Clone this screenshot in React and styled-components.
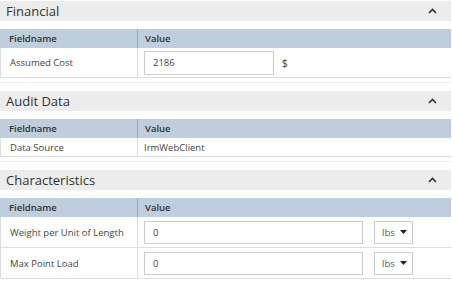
import React from "react";
import styled, { createGlobalStyle } from "styled-components";

const Global = createGlobalStyle`
  body {
    margin: 0;
    background: #ffffff;
    font-family: "Open Sans", "Liberation Sans", sans-serif;
    color: #333333;
  }
`;

const Page = styled.div`
  width: 451px;
  padding: 1px 0 0 0;
`;

const Section = styled.section`
  border-bottom: 1px solid #efefef;
  padding-bottom: 4px;
  margin-bottom: 8px;
`;

const Header = styled.div`
  height: 20px;
  background: #ececec;
  display: flex;
  align-items: center;
  justify-content: space-between;
  padding: 0 14px 0 6px;
  font-size: 13px;
  color: #333333;
`;

const Chevron = styled.svg`
  width: 9px;
  height: 6px;
`;

const Table = styled.div`
  margin-top: 8px;
  display: grid;
  grid-template-columns: 137px 1fr;
  font-size: 9.5px;
`;

const HeadCell = styled.div`
  background: #bfcedc;
  height: 19px;
  display: flex;
  align-items: center;
  padding-left: ${(p) => (p.$first ? "9px" : "7px")};
  font-weight: 600;
  color: #333333;
  border-left: ${(p) => (p.$first ? "none" : "1px solid #95a9bb")};
`;

const Cell = styled.div`
  min-height: ${(p) => p.$h}px;
  display: flex;
  align-items: center;
  padding-left: ${(p) => (p.$first ? "9px" : "6px")};
  border-bottom: 1px solid #dddddd;
  border-left: 1px solid #dddddd;
  box-sizing: border-box;
  gap: 8px;
  color: #444444;
`;

const Input = styled.div`
  box-sizing: border-box;
  width: ${(p) => p.$w}px;
  height: ${(p) => p.$ih}px;
  border: 1px solid #cccccc;
  display: flex;
  align-items: center;
  padding-left: 8px;
  color: #444444;
`;

const Unit = styled.span`
  color: #333333;
  font-size: 10px;
`;

const Select = styled.div`
  box-sizing: border-box;
  width: 39px;
  height: 23px;
  border: 1px solid #cccccc;
  margin-left: 3px;
  display: flex;
  align-items: center;
  padding-left: 7px;
  gap: 5px;
  color: #555555;
`;

const Caret = styled.svg`
  width: 7px;
  height: 4px;
`;

const Up = () => (
  <Chevron viewBox="0 0 9 6">
    <path d="M1 5 L4.5 1.5 L8 5" fill="none" stroke="#333" strokeWidth="1.6" />
  </Chevron>
);

const Down = () => (
  <Caret viewBox="0 0 7 4">
    <path d="M0 0 H7 L3.5 4 Z" fill="#222" />
  </Caret>
);

const Panel = ({ title, children }) => (
  <Section>
    <Header>
      <span>{title}</span>
      <Up />
    </Header>
    <Table>
      <HeadCell $first>Fieldname</HeadCell>
      <HeadCell>Value</HeadCell>
      {children}
    </Table>
  </Section>
);

const App = () => (
  <Page>
    <Global />
    <Panel title="Financial">
      <Cell $first $h={30}>Assumed Cost</Cell>
      <Cell $h={30}>
        <Input $w={130} $ih={24}>2186</Input>
        <Unit>$</Unit>
      </Cell>
    </Panel>
    <Panel title="Audit Data">
      <Cell $first $h={19}>Data Source</Cell>
      <Cell $h={19}>IrmWebClient</Cell>
    </Panel>
    <Panel title="Characteristics">
      <Cell $first $h={31}>Weight per Unit of Length</Cell>
      <Cell $h={31}>
        <Input $w={219} $ih={23}>0</Input>
        <Select>
          lbs <Down />
        </Select>
      </Cell>
      <Cell $first $h={31}>Max Point Load</Cell>
      <Cell $h={31}>
        <Input $w={219} $ih={23}>0</Input>
        <Select>
          lbs <Down />
        </Select>
      </Cell>
    </Panel>
  </Page>
);

export default App;
